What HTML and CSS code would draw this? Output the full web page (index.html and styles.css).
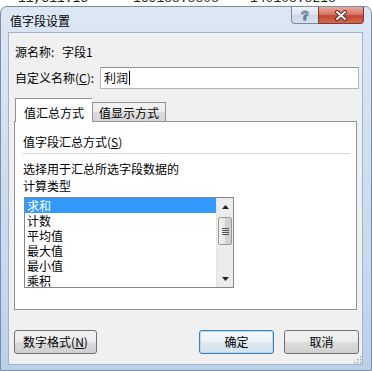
FILE: index.html
```html
<!DOCTYPE html>
<html lang="zh-CN">
<head>
<meta charset="utf-8">
<title>值字段设置</title>
<link rel="stylesheet" href="styles.css">
</head>
<body>
<div class="sheet">
  <div class="sheet-line"><span class="cell c1">11,511.15</span><span class="cell c2">169188.8808</span><span class="cell c3">140108.8218</span></div>
</div>
<div class="window">
  <div class="titlebar">
    <span class="title">值字段设置</span>
    <div class="caption">
      <div class="cap help">?</div>
      <div class="cap close">
        <svg width="14" height="11" viewBox="0 0 14 11">
          <path d="M3 2 L11 9 M11 2 L3 9" stroke="#5a2a22" stroke-width="4" stroke-linecap="round" fill="none"/>
          <path d="M3 2 L11 9 M11 2 L3 9" stroke="#ffffff" stroke-width="2" stroke-linecap="round" fill="none"/>
        </svg>
      </div>
    </div>
  </div>
  <div class="client">
    <div class="source"><span class="src-label">源名称:</span><span>字段1</span></div>
    <div class="name-row">
      <span class="name-label">自定义名称(<u>C</u>):</span>
      <div class="input"><span>利润</span><span class="caret"></span></div>
    </div>
    <div class="tabs">
      <div class="tab active">值汇总方式</div>
      <div class="tab">值显示方式</div>
    </div>
    <div class="panel">
      <div class="group">值字段汇总方式(<u>S</u>)</div>
      <div class="sep"></div>
      <div class="desc">选择用于汇总所选字段数据的<br>计算类型</div>
      <div class="listbox">
        <ul class="items">
          <li class="sel">求和</li>
          <li>计数</li>
          <li>平均值</li>
          <li>最大值</li>
          <li>最小值</li>
          <li>乘积</li>
        </ul>
        <div class="scrollbar">
          <div class="sb-btn"><svg width="7" height="4" viewBox="0 0 7 4"><path d="M0 4 L3.5 0 L7 4 Z" fill="#222"/></svg></div>
          <div class="sb-track">
            <div class="thumb"><span class="grip"></span><span class="grip"></span><span class="grip"></span><span class="grip"></span></div>
          </div>
          <div class="sb-btn"><svg width="7" height="4" viewBox="0 0 7 4"><path d="M0 0 L7 0 L3.5 4 Z" fill="#222"/></svg></div>
        </div>
      </div>
    </div>
    <div class="buttons">
      <div class="btn fmt">数字格式(<u>N</u>)</div>
      <div class="spacer"></div>
      <div class="btn default">确定</div>
      <div class="btn">取消</div>
    </div>
    <svg class="sizegrip" width="10" height="10" viewBox="0 0 10 10">
      <g fill="#9aa5b3">
        <rect x="8" y="2" width="1.5" height="1.5"/>
        <rect x="5" y="5" width="1.5" height="1.5"/><rect x="8" y="5" width="1.5" height="1.5"/>
        <rect x="2" y="8" width="1.5" height="1.5"/><rect x="5" y="8" width="1.5" height="1.5"/><rect x="8" y="8" width="1.5" height="1.5"/>
      </g>
    </svg>
  </div>
</div>
</body>
</html>
```

FILE: styles.css
```css
* { box-sizing: border-box; }
html, body { margin: 0; padding: 0; }
body {
  width: 372px;
  height: 371px;
  overflow: hidden;
  background: #ffffff;
  font-family: "Noto Sans CJK SC", "Microsoft YaHei", sans-serif;
  font-size: 12px;
  color: #000;
}

/* background spreadsheet strip */
.sheet {
  height: 6px;
  overflow: hidden;
}
.sheet-line {
  margin-top: -8px;
  padding-left: 18px;
  font-family: "Liberation Mono", monospace;
  font-size: 13px;
  line-height: 14px;
  color: #222;
  white-space: nowrap;
}
.cell { display: inline-block; }
.c1 { width: 115px; }
.c2 { width: 117px; }

/* window frame */
.window {
  height: 365px;
  border: 1px solid #7c8ea5;
  border-radius: 7px 7px 0 0;
  background: linear-gradient(to bottom, #dce7f4 0%, #d3e1f1 30%, #c3d7ed 80%, #b9d0ea 100%);
  padding: 0 8px 5px 7px;
  display: flex;
  flex-direction: column;
}
.titlebar {
  height: 25px;
  display: flex;
  justify-content: space-between;
  align-items: flex-start;
}
.title {
  padding: 6px 0 0 2px;
  line-height: 16px;
  font-size: 12px;
  color: #000;
}
.caption {
  display: flex;
  margin-right: -1px;
}
.cap {
  height: 17px;
  display: flex;
  align-items: center;
  justify-content: center;
}
.help {
  width: 27px;
  border: 1px solid #7a8ba1;
  border-top: none;
  border-right: none;
  border-radius: 0 0 0 4px;
  background: linear-gradient(to bottom, #eef3f9 0%, #dbe5f1 50%, #c9d7e7 51%, #d7e3f0 100%);
  font-family: "Liberation Sans", sans-serif;
  font-weight: bold;
  font-size: 13px;
  color: #f4f7fb;
  -webkit-text-stroke: 1px #5f7189;
  line-height: 1;
}
.close {
  width: 46px;
  border: 1px solid #7e3b32;
  border-top: none;
  border-radius: 0 0 4px 0;
  background: linear-gradient(to bottom, #e9a99d 0%, #d8786a 45%, #c44533 55%, #d2694f 100%);
}

/* client area */
.client {
  position: relative;
  height: 333px;
  border: 1px solid #a3b3c7;
  background: #f0f0f0;
  display: flex;
  flex-direction: column;
}
.source {
  padding: 11px 0 0 6px;
  line-height: 16px;
  display: flex;
}
.src-label { width: 47px; }
.name-row {
  margin: 7px 3px 0 6px;
  display: flex;
  align-items: center;
  height: 22px;
}
.name-label {
  width: 85px;
  line-height: 16px;
}
.input {
  flex: 1;
  height: 22px;
  background: #fff;
  border: 1px solid #b4b6ba;
  border-top-color: #8f9296;
  padding-left: 3px;
  display: flex;
  align-items: center;
  line-height: 16px;
}
.caret {
  width: 1px;
  height: 14px;
  background: #000;
  margin-left: 1px;
}

/* tabs */
.tabs {
  margin-top: 9px;
  padding-left: 6px;
  height: 23px;
  display: flex;
  align-items: flex-end;
}
.tab {
  height: 19px;
  width: 74px;
  border: 1px solid #8e9399;
  border-bottom: none;
  background: linear-gradient(to bottom, #f3f3f3 0%, #ebebeb 50%, #dddddd 51%, #d5d5d5 100%);
  text-align: center;
  line-height: 18px;
  padding-top: 1px;
}
.tab.active {
  position: relative;
  z-index: 1;
  width: 77px;
  height: 24px;
  margin-bottom: -1px;
  background: #ffffff;
  border-right: none;
  line-height: 16px;
  padding-top: 6px;
}

/* panel */
.panel {
  margin: 0 5px;
  height: 189px;
  border: 1px solid #8e9399;
  background: #ffffff;
  display: flex;
  flex-direction: column;
}
.group {
  margin: 12px 0 0 8px;
  line-height: 16px;
}
.sep {
  margin: 3px 6px 0 8px;
  height: 1px;
  background: #d0d5da;
}
.desc {
  margin: 6px 0 0 8px;
  line-height: 17px;
}
.listbox {
  margin: 3px 0 0 9px;
  width: 210px;
  height: 91px;
  border: 1px solid #828790;
  display: flex;
  overflow: hidden;
}
.items {
  list-style: none;
  margin: 0;
  padding: 0;
  flex: 1;
}
.items li {
  height: 15px;
  line-height: 15px;
  padding-left: 2px;
  white-space: nowrap;
  overflow: hidden;
}
.items li.sel {
  background: #3399ff;
  color: #ffffff;
}
.scrollbar {
  width: 17px;
  background: #ececec;
  border-left: 1px solid #e4e4e4;
  display: flex;
  flex-direction: column;
}
.sb-btn {
  height: 17px;
  display: flex;
  align-items: center;
  justify-content: center;
}
.sb-track {
  flex: 1;
  padding: 2px 1px 0 1px;
}
.thumb {
  height: 28px;
  border: 1px solid #9a9a9a;
  border-radius: 2px;
  background: linear-gradient(to right, #f2f2f2 0%, #e6e6e6 50%, #d4d4d4 51%, #cfcfcf 100%);
  display: flex;
  flex-direction: column;
  justify-content: center;
  align-items: center;
  gap: 1px;
}
.grip {
  width: 7px;
  height: 1px;
  background: #555;
}

/* bottom buttons */
.buttons {
  margin: 20px 3px 0 5px;
  height: 24px;
  display: flex;
  gap: 10px;
}
.spacer { flex: 1; }
.btn {
  width: 75px;
  height: 24px;
  border: 1px solid #707070;
  border-radius: 3px;
  background: linear-gradient(to bottom, #f2f2f2 0%, #ebebeb 50%, #dddddd 51%, #cfcfcf 100%);
  display: flex;
  align-items: center;
  justify-content: center;
  line-height: 16px;
}
.btn.fmt { width: 83px; }
.btn.default {
  border-color: #3c7fb1;
  box-shadow: inset 0 0 0 1px #b6dcf5;
  background: linear-gradient(to bottom, #f4f8fb 0%, #ebf2f7 50%, #dde8f0 51%, #d4e2ec 100%);
}
.btn u, .group u, .name-label u { text-underline-offset: 1px; }

.sizegrip {
  position: absolute;
  right: 0;
  bottom: 0;
}
```
